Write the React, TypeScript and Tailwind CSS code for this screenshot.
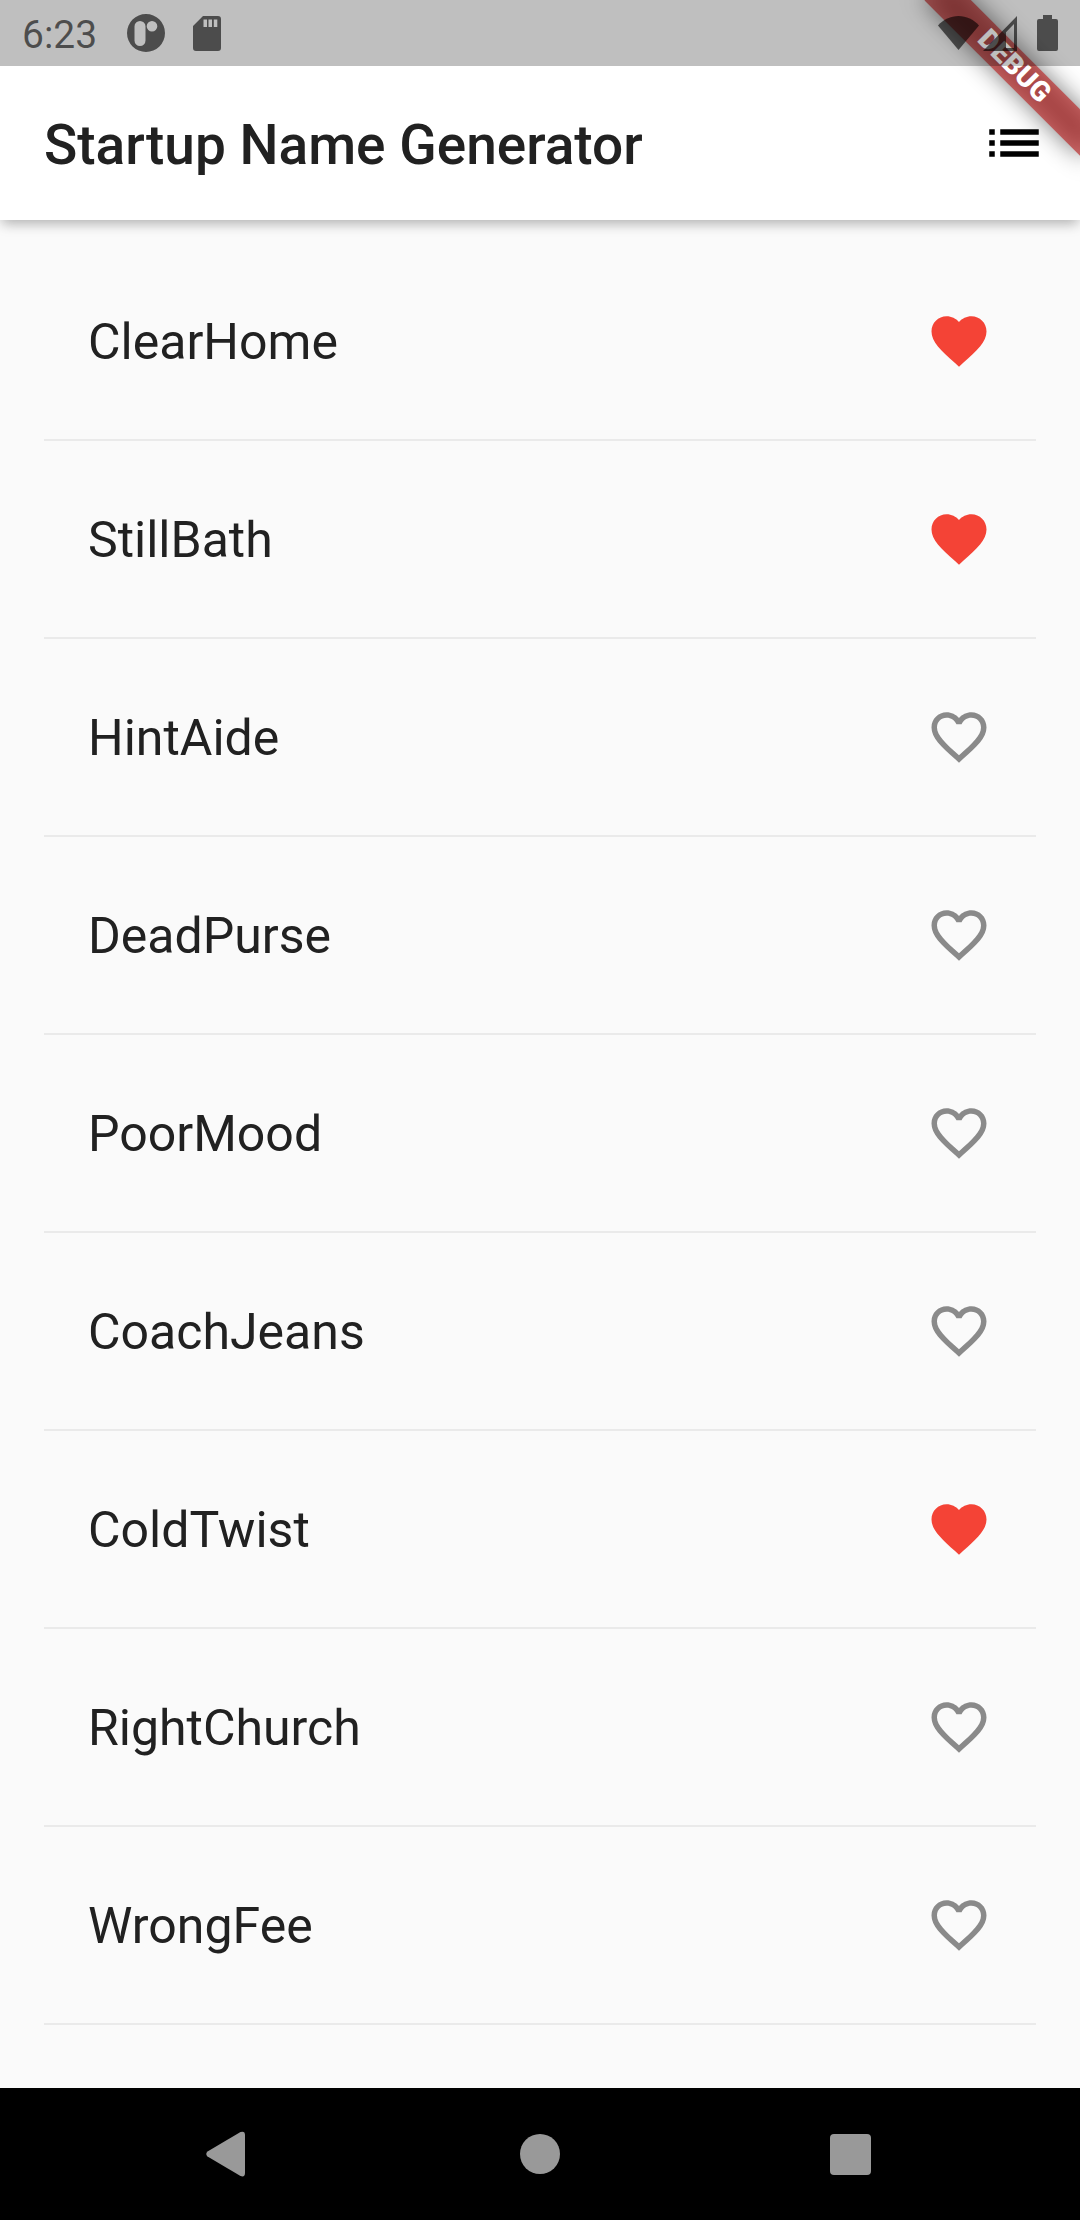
import { useState } from "react";

const HEART =
  "M12 21.35l-1.45-1.32C5.4 15.36 2 12.28 2 8.5 2 5.42 4.42 3 7.5 3c1.74 0 3.41.81 4.5 2.09C13.09 3.81 14.76 3 16.5 3 19.58 3 22 5.42 22 8.5c0 3.78-3.4 6.86-8.55 11.54L12 21.35z";
const HEART_OUTLINE =
  "M16.5 3c-1.74 0-3.41.81-4.5 2.09C10.91 3.81 9.24 3 7.5 3 4.42 3 2 5.42 2 8.5c0 3.78 3.4 6.86 8.55 11.54L12 21.35l1.45-1.32C18.6 15.36 22 12.28 22 8.5 22 5.42 19.58 3 16.5 3zm-4.4 15.55l-.1.1-.1-.1C7.14 14.24 4 11.39 4 8.5 4 6.5 5.5 5 7.5 5c1.54 0 3.04.99 3.57 2.36h1.87C13.46 5.99 14.96 5 16.5 5c2 0 3.5 1.5 3.5 3.5 0 2.89-3.14 5.74-7.9 10.05z";

const NAMES = [
  "ClearHome",
  "StillBath",
  "HintAide",
  "DeadPurse",
  "PoorMood",
  "CoachJeans",
  "ColdTwist",
  "RightChurch",
  "WrongFee",
];

function StatusBar() {
  return (
    <div className="relative z-20 flex h-[66px] items-center justify-between bg-black/25 px-[22px] text-black/60">
      <div className="flex items-center">
        <span className="pt-1 text-[39px] leading-[46px]">6:23</span>
        <svg className="ml-[30px] h-[38px] w-[38px]" viewBox="0 0 38 38" fill="currentColor" aria-hidden="true">
          <path
            fillRule="evenodd"
            d="M19 0a19 19 0 1 1 0 38a19 19 0 1 1 0-38zM13 7a5.5 5.5 0 0 0-5.5 5.5v14a5.5 5.5 0 0 0 11 0v-14A5.5 5.5 0 0 0 13 7zM25 7a5.3 5.3 0 1 0 0 10.6a5.3 5.3 0 1 0 0-10.6z"
          />
        </svg>
        <svg className="ml-7 h-[35px] w-[28px]" viewBox="0 0 28 35" fill="currentColor" aria-hidden="true">
          <path
            fillRule="evenodd"
            d="M10 0h15a3 3 0 0 1 3 3v29a3 3 0 0 1-3 3H3a3 3 0 0 1-3-3V10zM10.5 3.5v7.5h3.5V3.5zM15.5 3.5v7.5h3.5V3.5zM20.8 3.5v7.5h3.5V3.5z"
          />
        </svg>
      </div>
      <div className="flex items-center">
        <svg className="h-[34px] w-[41px]" viewBox="0 0 41 34" fill="currentColor" aria-hidden="true">
          <path d="M0 9.5C5.5 3.5 12.5 0 20.5 0S35.500 3.5 41 9.5L20.5 34z" />
        </svg>
        <svg className="ml-1 h-[35px] w-[34px]" viewBox="0 0 34 35" fill="currentColor" aria-hidden="true">
          <path fillRule="evenodd" d="M34 0v35H0zM31 8l-8 8.200V32h8z" />
        </svg>
        <svg className="ml-5 h-[36px] w-[21px]" viewBox="0 0 21 36" fill="currentColor" aria-hidden="true">
          <path d="M6 0h9v4h4a2 2 0 0 1 2 2v28a2 2 0 0 1-2 2H2a2 2 0 0 1-2-2V6a2 2 0 0 1 2-2h4z" />
        </svg>
      </div>
    </div>
  );
}

function DebugBanner() {
  return (
    <div className="pointer-events-none absolute right-0 top-0 z-10 flex h-[132px] w-[132px] items-center justify-center">
      <div className="relative h-[33px] w-[220px] shrink-0 rotate-45">
        <div className="absolute inset-0 bg-black/50 blur-[12px]" />
        <div className="relative bg-[#b71c1c]/63 pb-[2px] text-center text-[28px] font-black leading-[31px] text-white">
          DEBUG
        </div>
      </div>
    </div>
  );
}

function NameRow({ name, initial }: { name: string; initial: boolean }) {
  const [saved, setSaved] = useState(initial);
  return (
    <li>
      <button
        type="button"
        aria-pressed={saved}
        onClick={() => setSaved(!saved)}
        className="flex h-[154px] w-full items-center justify-between px-11 text-left"
      >
        <span className="pt-[2px] text-[50px] leading-[60px]">{name}</span>
        <svg
          className={saved ? "h-[66px] w-[66px] text-[#f44336]" : "h-[66px] w-[66px] text-[#8a8a8a]"}
          viewBox="0 0 24 24"
          fill="currentColor"
          aria-hidden="true"
        >
          <path d={saved ? HEART : HEART_OUTLINE} />
        </svg>
      </button>
      <div className="flex h-11 items-center">
        <div className="h-[2px] w-full bg-[#eaeaea]" />
      </div>
    </li>
  );
}

function NavBar() {
  return (
    <nav className="flex h-[132px] bg-black px-[74px] text-[#999999]">
      <button type="button" aria-label="Back" className="flex flex-1 items-center justify-center">
        <svg className="h-[46px] w-[46px]" viewBox="0 0 46 46" fill="currentColor" aria-hidden="true">
          <path d="M1.5 20.5L34.5 1Q39 -.5 39 4V42Q39 46.5 34.5 45L1.5 25.5Q-1 23 1.5 20.5z" />
        </svg>
      </button>
      <button type="button" aria-label="Home" className="flex flex-1 items-center justify-center">
        <span className="h-10 w-10 rounded-full bg-[#999999]" />
      </button>
      <button type="button" aria-label="Recent apps" className="flex flex-1 items-center justify-center">
        <span className="h-[41px] w-[41px] rounded-[4px] bg-[#999999]" />
      </button>
    </nav>
  );
}

export default function App() {
  return (
    <div className="relative flex min-h-screen flex-col overflow-hidden bg-[#fafafa] font-['Roboto',sans-serif] text-[#212121]">
      <header className="relative bg-white shadow-[0_6px_11px_-3px_rgba(0,0,0,0.2),0_4px_14px_rgba(0,0,0,0.12)]">
        <StatusBar />
        <div className="flex h-[154px] items-center justify-between pl-11">
          <h1 className="pt-1 text-[55px] font-medium leading-[66px]">Startup Name Generator</h1>
          <button type="button" aria-label="Saved names" className="flex h-[132px] w-[132px] items-center justify-center text-black">
            <svg className="h-[66px] w-[66px]" viewBox="0 0 24 24" fill="currentColor" aria-hidden="true">
              <path d="M3 13h2v-2H3v2zm0 4h2v-2H3v2zm0-8h2V7H3v2zm4 4h14v-2H7v2zm0 4h14v-2H7v2zM7 7v2h14V7H7z" />
            </svg>
          </button>
        </div>
        <DebugBanner />
      </header>
      <main className="flex-1 px-11 pt-11">
        <ul>
          {NAMES.map((name) => (
            <NameRow
              key={name}
              name={name}
              initial={name === "ClearHome" || name === "StillBath" || name === "ColdTwist"}
            />
          ))}
        </ul>
      </main>
      <NavBar />
    </div>
  );
}
